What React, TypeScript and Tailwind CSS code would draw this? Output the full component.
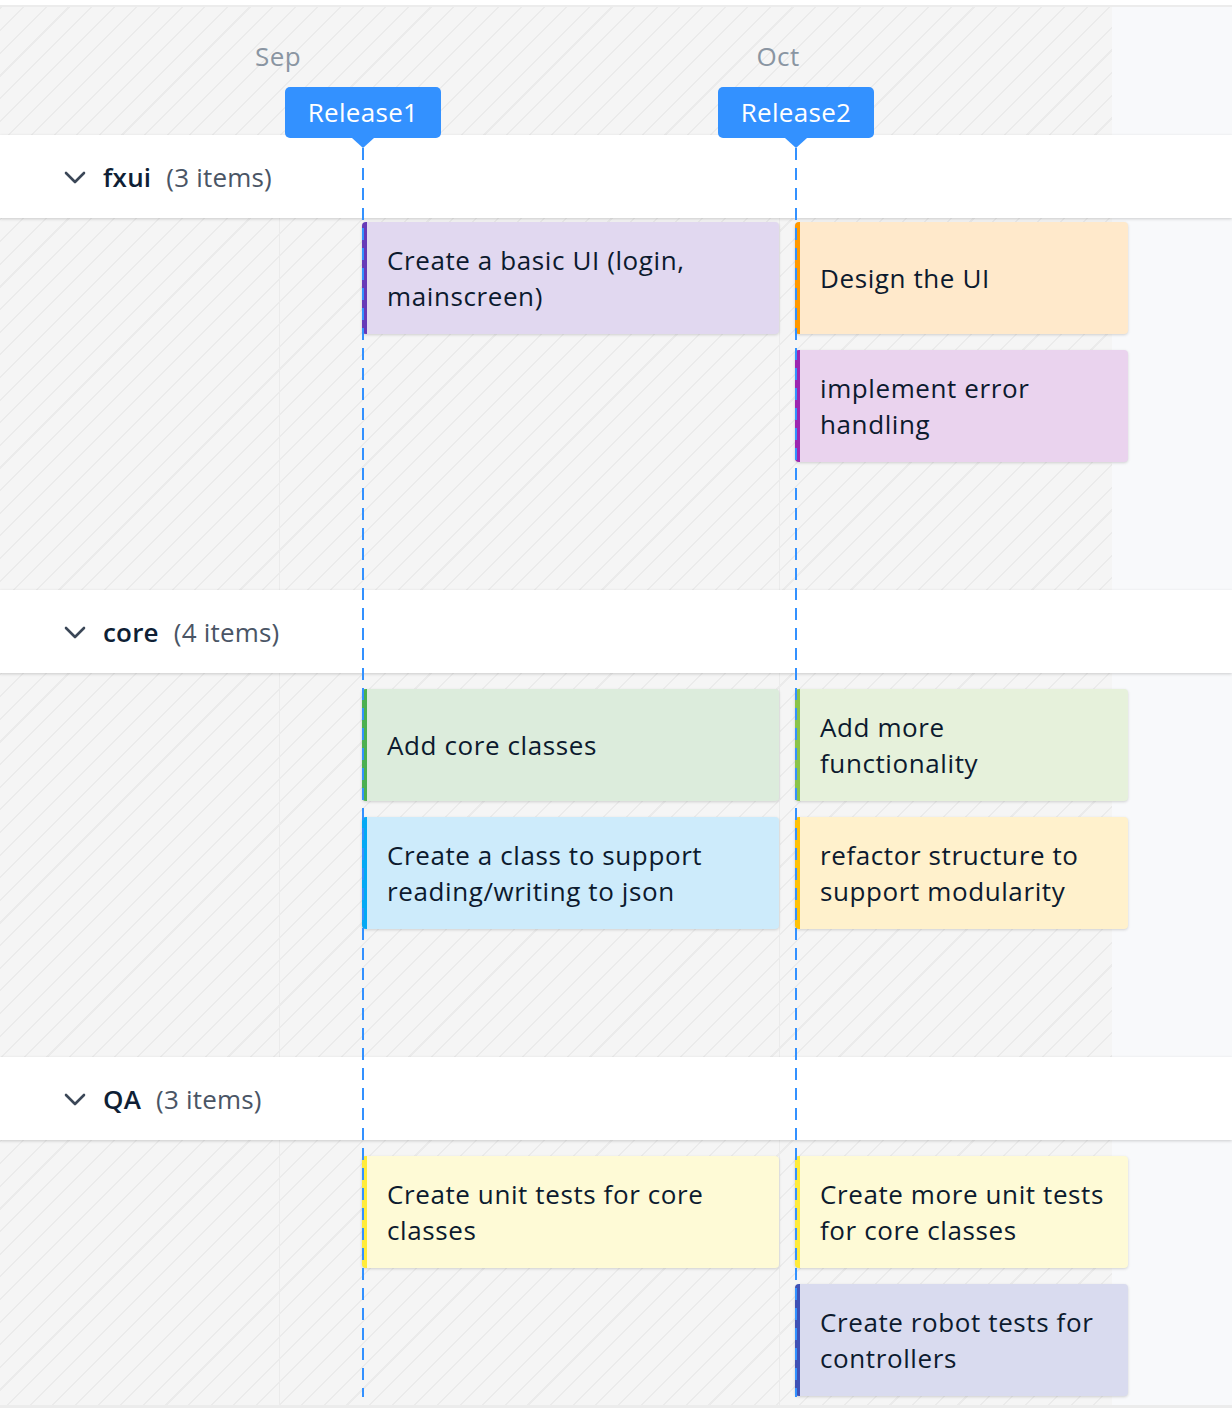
import React from "react";

type Card = { text: string; bg: string; border: string };

type Group = {
  name: string;
  count: number;
  bodyH: string;
  padTop: string;
  col1: Card[];
  col2: Card[];
};

const groups: Group[] = [
  {
    name: "fxui",
    count: 3,
    bodyH: "h-[372px]",
    padTop: "pt-[4px]",
    col1: [{ text: "Create a basic UI (login, mainscreen)", bg: "bg-[#e1d8f0]", border: "border-[#673ab7]" }],
    col2: [
      { text: "Design the UI", bg: "bg-[#ffe9cb]", border: "border-[#ff9800]" },
      { text: "implement error handling", bg: "bg-[#ead3ee]", border: "border-[#9c27b0]" },
    ],
  },
  {
    name: "core",
    count: 4,
    bodyH: "h-[384px]",
    padTop: "pt-[16px]",
    col1: [
      { text: "Add core classes", bg: "bg-[#dcecdc]", border: "border-[#4caf50]" },
      { text: "Create a class to support reading/writing to json", bg: "bg-[#cdebfb]", border: "border-[#03a9f4]" },
    ],
    col2: [
      { text: "Add more functionality", bg: "bg-[#e6f1db]", border: "border-[#8bc34a]" },
      { text: "refactor structure to support modularity", bg: "bg-[#fff1cc]", border: "border-[#ffc107]" },
    ],
  },
  {
    name: "QA",
    count: 3,
    bodyH: "h-[265px]",
    padTop: "pt-[16px]",
    col1: [{ text: "Create unit tests for core classes", bg: "bg-[#fefad6]", border: "border-[#ffeb3b]" }],
    col2: [
      { text: "Create more unit tests for core classes", bg: "bg-[#fefad6]", border: "border-[#ffeb3b]" },
      { text: "Create robot tests for controllers", bg: "bg-[#d9dbef]", border: "border-[#3f51b5]" },
    ],
  },
];

const hatch =
  "bg-[repeating-linear-gradient(135deg,#ebebeb_0px,#ebebeb_1.5px,#f5f5f5_1.5px,#f5f5f5_16px)]";

function CardView({ c, w }: { c: Card; w: string }) {
  return (
    <div
      className={`${w} h-[112px] ${c.bg} ${c.border} border-l-[5px] rounded-[4px] shadow-[0_1px_3px_rgba(0,0,0,0.16)] flex items-center pl-[20px] pr-[24px] text-[26px] tracking-[0.6px] leading-[36px] text-[#0c1a2e]`}
    >
      <span>{c.text}</span>
    </div>
  );
}

function Chevron() {
  return (
    <svg width="22" height="14" viewBox="0 0 22 14" className="shrink-0">
      <polyline points="2,2 11,11 20,2" fill="none" stroke="#3b4757" strokeWidth="2.6" strokeLinecap="round" strokeLinejoin="round" />
    </svg>
  );
}

function GroupView({ g }: { g: Group }) {
  return (
    <div>
      <div className="relative z-10 h-[83px] bg-white flex items-center pl-[64px] pt-[2px] shadow-[0_1px_3px_rgba(0,0,0,0.18)] text-[26px] tracking-[0.2px]">
        <Chevron />
        <span className="ml-[17px] font-semibold text-[#0f1f35]">{g.name}</span>
        <span className="ml-[15px] text-[#4a5565]">({g.count} items)</span>
      </div>
      <div className={`flex ${g.bodyH}`}>
        <div className={`relative w-[1112px] ${hatch} ${g.padTop}`}>
          <div className="absolute left-[279px] top-0 bottom-0 w-px bg-[#ebebeb]" />
          <div className="absolute left-[779px] top-0 bottom-0 w-px bg-[#ebebeb]" />
          <div className="relative flex gap-[16px] pl-[362px]">
            <div className="flex flex-col gap-[16px]">
              {g.col1.map((c) => (
                <CardView key={c.text} c={c} w="w-[417px]" />
              ))}
            </div>
            <div className="flex flex-col gap-[16px]">
              {g.col2.map((c) => (
                <CardView key={c.text} c={c} w="w-[333px]" />
              ))}
            </div>
          </div>
        </div>
        <div className="flex-1 bg-[#f8f9fb]" />
      </div>
    </div>
  );
}

function Release({ label, left }: { label: string; left: string }) {
  return (
    <div className={`absolute ${left} top-[87px] z-30 flex flex-col items-center w-[156px]`}>
      <div className="w-[156px] h-[51px] rounded-[5px] bg-[#3391ff] text-white text-[26px] tracking-[0.3px] flex items-center justify-center">
        {label}
      </div>
      <div className="w-0 h-0 border-l-[11px] border-r-[11px] border-t-[10px] border-l-transparent border-r-transparent border-t-[#3391ff]" />
      <div className="w-[2px] h-[1249px] bg-[repeating-linear-gradient(to_bottom,#3391ff_0px,#3391ff_12px,transparent_12px,transparent_20px)]" />
    </div>
  );
}

export default function App() {
  return (
    <div className="relative w-[1232px] h-[1408px] bg-white overflow-hidden font-['Open_Sans',sans-serif]">
      <div className="h-[5px] bg-white" />
      <div className="h-[2px] bg-[#ececec]" />
      <div className="flex h-[128px]">
        <div className={`w-[1112px] ${hatch} flex pl-[28px] pt-[31px] text-[26px] tracking-[0.4px] leading-[36px] text-[#8a95a2]`}>
          <div className="w-[500px] text-center">Sep</div>
          <div className="w-[500px] text-center">Oct</div>
        </div>
        <div className="flex-1 bg-[#f8f9fb]" />
      </div>
      {groups.map((g) => (
        <GroupView key={g.name} g={g} />
      ))}
      <div className="h-[3px] bg-[#ececec]" />
      <Release label="Release1" left="left-[285px]" />
      <Release label="Release2" left="left-[718px]" />
    </div>
  );
}
